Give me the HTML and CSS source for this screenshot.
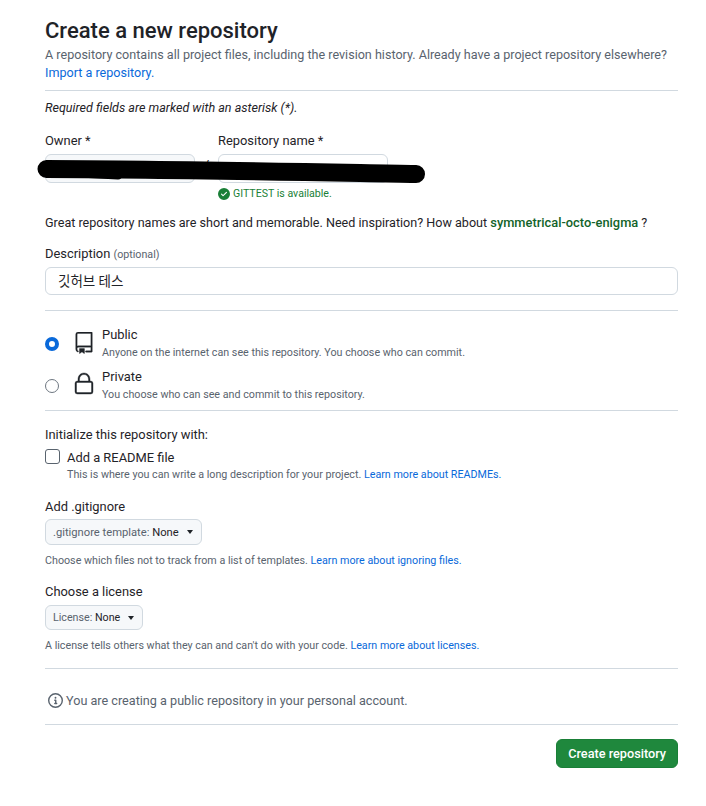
FILE: index.html
```html
<!DOCTYPE html>
<html lang="en">
<head>
<meta charset="utf-8">
<title>Create a new repository</title>
<link rel="stylesheet" href="styles.css">
</head>
<body>
<main class="page">
  <header class="head">
    <h1 class="title">Create a new repository</h1>
    <p class="lead">A repository contains all project files, including the revision history. Already have a project repository elsewhere?<br><a class="link" href="#">Import a repository.</a></p>
  </header>
  <p class="required">Required fields are marked with an asterisk (*).</p>

  <div class="name-row">
    <div class="owner">
      <div class="label">Owner *</div>
      <div class="input owner-input"></div>
    </div>
    <div class="slash">/</div>
    <div class="repo">
      <div class="label">Repository name *</div>
      <div class="input repo-input"></div>
      <div class="available">
        <svg class="check" viewBox="0 0 16 16" width="12" height="12"><path fill="#1a7f37" d="M8 16A8 8 0 1 1 8 0a8 8 0 0 1 0 16Zm3.78-9.72a.751.751 0 0 0-.018-1.042.751.751 0 0 0-1.042-.018L6.75 9.19 5.28 7.72a.751.751 0 0 0-1.042.018.751.751 0 0 0-.018 1.042l2 2a.75.75 0 0 0 1.06 0Z"/></svg>
        <span>GITTEST is available.</span>
      </div>
    </div>
  </div>

  <p class="hint">Great repository names are short and memorable. Need inspiration? How about <span class="suggest">symmetrical-octo-enigma</span> ?</p>

  <div class="label desc-label">Description <span class="optional">(optional)</span></div>
  <div class="input desc-input">깃허브 테스</div>

  <hr class="rule rule-vis">

  <div class="vis">
    <span class="radio radio-on"></span>
    <svg class="vis-icon" viewBox="0 0 24 24" width="22" height="22"><path d="M3 2.75A2.75 2.75 0 0 1 5.75 0h14.5a.75.75 0 0 1 .75.75v20.5a.75.75 0 0 1-.75.75h-6a.75.75 0 0 1 0-1.5h5.25v-4H6A1.5 1.5 0 0 0 4.5 18v.75c0 .716.43 1.334 1.05 1.605a.75.75 0 0 1-.6 1.374A3.251 3.251 0 0 1 3 18.75ZM19.5 1.5H5.75c-.69 0-1.25.56-1.25 1.25v12.651A2.989 2.989 0 0 1 6 15h13.5Z"/><path d="M7 18.25a.25.25 0 0 1 .25-.25h5a.25.25 0 0 1 .25.25v5.01a.25.25 0 0 1-.397.201l-2.206-1.604a.25.25 0 0 0-.294 0L7.397 23.46a.25.25 0 0 1-.397-.2Z"/></svg>
    <div class="vis-text">
      <div class="vis-title">Public</div>
      <div class="note">Anyone on the internet can see this repository. You choose who can commit.</div>
    </div>
  </div>
  <div class="vis vis-private">
    <span class="radio"></span>
    <svg class="vis-icon vis-icon-lock" viewBox="0 0 24 24" width="24" height="24"><path d="M6 9V7.25C6 3.845 8.503 1 12 1s6 2.845 6 6.25V9h.5a2.5 2.5 0 0 1 2.5 2.5v8a2.5 2.5 0 0 1-2.5 2.5h-13A2.5 2.5 0 0 1 3 19.5v-8A2.5 2.5 0 0 1 5.5 9Zm-1.5 2.5v8a1 1 0 0 0 1 1h13a1 1 0 0 0 1-1v-8a1 1 0 0 0-1-1h-13a1 1 0 0 0-1 1Zm3-4.25V9h9V7.25c0-2.67-1.922-4.75-4.5-4.75-2.578 0-4.5 2.08-4.5 4.75Z"/></svg>
    <div class="vis-text vis-text-lock">
      <div class="vis-title">Private</div>
      <div class="note">You choose who can see and commit to this repository.</div>
    </div>
  </div>

  <hr class="rule rule-init">

  <div class="label init-label">Initialize this repository with:</div>
  <div class="readme">
    <span class="checkbox"></span>
    <div>
      <div class="readme-title">Add a README file</div>
      <div class="note">This is where you can write a long description for your project. <a class="link" href="#">Learn more about READMEs.</a></div>
    </div>
  </div>

  <div class="label ignore-label">Add .gitignore</div>
  <div class="select select-ignore"><span class="select-key">.gitignore template:</span> None<span class="caret"></span></div>
  <div class="note select-note">Choose which files not to track from a list of templates. <a class="link" href="#">Learn more about ignoring files.</a></div>

  <div class="label license-label">Choose a license</div>
  <div class="select select-license"><span class="select-key">License:</span> None<span class="caret"></span></div>
  <div class="note select-note">A license tells others what they can and can't do with your code. <a class="link" href="#">Learn more about licenses.</a></div>

  <hr class="rule rule-info">
  <div class="info">
    <svg viewBox="0 0 16 16" width="15" height="15"><path fill="#59636e" d="M0 8a8 8 0 1 1 16 0A8 8 0 0 1 0 8Zm8-6.5a6.5 6.5 0 1 0 0 13 6.5 6.5 0 0 0 0-13ZM6.5 7.75A.75.75 0 0 1 7.25 7h1a.75.75 0 0 1 .75.75v2.75h.25a.75.75 0 0 1 0 1.5h-2a.75.75 0 0 1 0-1.5h.25v-2h-.25a.75.75 0 0 1-.75-.75ZM8 6a1 1 0 1 1 0-2 1 1 0 0 1 0 2Z"/></svg>
    <span>You are creating a public repository in your personal account.</span>
  </div>
  <hr class="rule rule-end">
  <div class="actions"><button class="create" type="button">Create repository</button></div>

  <svg class="scribble" viewBox="0 0 706 806" width="706" height="806" aria-hidden="true">
    <path d="M46.5 169 C 150 169 300 172 416 174" fill="none" stroke="#000" stroke-width="18" stroke-linecap="round"/>
    <path d="M50 172 L 118 175.500" fill="none" stroke="#000" stroke-width="8" stroke-linecap="round"/>
  </svg>
</main>
</body>
</html>
```
FILE: styles.css
```css
* { box-sizing: border-box; }
html, body { margin: 0; padding: 0; background: #fff; }
body {
  font-family: Roboto, "Noto Sans", "Noto Sans CJK KR", sans-serif;
  font-size: 13px;
  color: #1f2328;
}
.page { position: relative; width: 706px; height: 806px; padding: 16px 28px 0 45px; overflow: hidden; }
.head { border-bottom: 1px solid #d1d9e0; height: 75px; }
.title { margin: 0; font-size: 22px; font-weight: 500; line-height: 30px; }
.lead { margin: 0; color: #59636e; font-size: 12.58px; line-height: 18px; white-space: nowrap; }
.link { color: #0969da; text-decoration: none; }
.required { margin: 8px 0 0; font-style: italic; font-size: 12.55px; line-height: 17px; }
.label { font-size: 12.9px; font-weight: 450; line-height: 18px; }
.name-row { display: flex; margin-top: 16px; }
.owner { width: 150px; }
.slash { width: 23px; padding-top: 26px; text-align: center; font-size: 14px; }
.repo { width: 170px; }
.input { border: 1px solid #d1d9e0; border-radius: 6px; background: #fff; }
.owner-input { height: 29px; margin-top: 4px; background: #f6f8fa; }
.repo-input { height: 29px; margin-top: 4px; }
.available { display: flex; align-items: center; gap: 3px; margin-top: 4px; font-size: 10.6px; line-height: 14px; color: #1a7f37; white-space: nowrap; }
.hint { margin: 13px 0 0; font-size: 12.58px; line-height: 18px; white-space: nowrap; }
.suggest { color: #116329; font-weight: 500; font-size: 12.85px; }
.desc-label { margin-top: 13px; }
.optional { color: #59636e; font-size: 10.7px; font-weight: 400; }
.desc-input { height: 28px; margin-top: 3px; padding-left: 12px; font-size: 13.5px; line-height: 26px; }
.rule { border: 0; border-top: 1px solid #d1d9e0; margin: 0; }
.rule-vis { margin-top: 15px; }
.vis { display: flex; align-items: center; margin-top: 15px; height: 36px; }
.vis-private { margin-top: 6px; }
.radio { width: 14px; height: 14px; border: 1px solid #6e7781; border-radius: 50%; flex: none; }
.radio-on { border: 4.5px solid #0969da; }
.vis-icon { margin: 0 0 2px 13.5px; flex: none; fill: #1f2328; stroke: #1f2328; stroke-width: 0.4; }
.vis-icon-lock { margin: 0 0 4px 12.5px; }
.vis-text { margin-left: 7.5px; }
.vis-text-lock { margin-left: 6.5px; }
.vis-title { font-size: 12.9px; font-weight: 450; line-height: 18px; }
.note { color: #59636e; font-size: 10.73px; line-height: 18px; white-space: nowrap; }
.rule-init { margin-top: 6px; }
.init-label { margin-top: 15px; }
.readme { display: flex; margin-top: 5px; }
.checkbox { width: 15px; height: 15px; margin-right: 7px; border: 1px solid #59636e; border-radius: 3px; flex: none; }
.readme-title { font-size: 12.9px; font-weight: 450; line-height: 17px; }
.ignore-label { margin-top: 14px; }
.select { display: inline-flex; align-items: center; height: 26px; margin-top: 3px; padding: 0 8px 0 7px; border: 1px solid #d1d9e0; border-radius: 6px; background: #f6f8fa; font-size: 10.7px; font-weight: 400; white-space: pre; }
.select-ignore { font-size: 11.2px; }
.select-license { height: 25px; margin-top: 4px; }
.select-key { color: #59636e; }
.caret { width: 0; height: 0; margin-left: 8px; border-left: 3.5px solid transparent; border-right: 3.5px solid transparent; border-top: 4px solid #1f2328; }
.select-note { margin-top: 7px; }
.license-label { margin-top: 13px; }
.rule-info { margin-top: 13px; }
.info { display: flex; align-items: center; gap: 3px; height: 55px; padding: 8px 0 0 3px; color: #59636e; font-size: 12.63px; }
.actions { display: flex; justify-content: flex-end; margin-top: 14px; }
.create { height: 29px; padding: 0 11px; border: 1px solid #1a7f37; border-radius: 6px; background: #1f883d; color: #fff; font: 500 12.7px Roboto, sans-serif; }
.scribble { position: absolute; left: 0; top: 0; pointer-events: none; }
```
